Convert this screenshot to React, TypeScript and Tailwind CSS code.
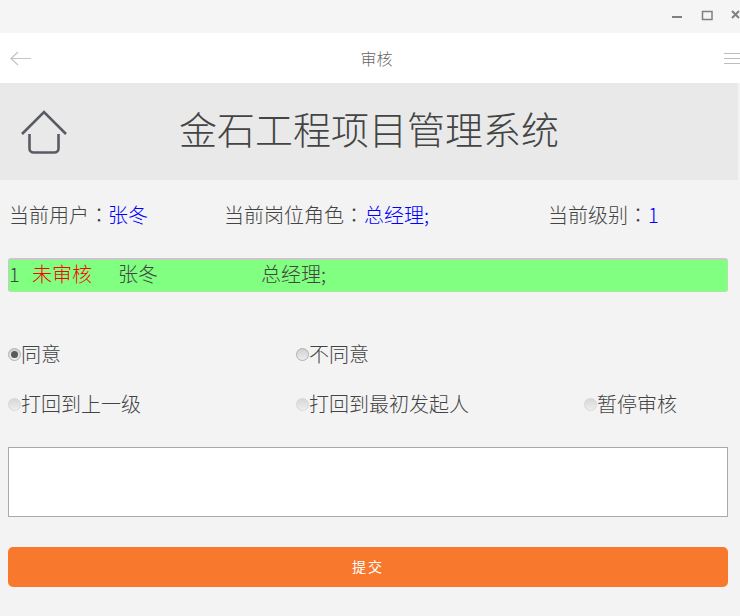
const FONT = "font-['Noto_Sans_CJK_SC','Liberation_Sans',sans-serif]";

function Radio({ checked, faded, label }: { checked?: boolean; faded?: boolean; label: string }) {
  return (
    <label className="flex h-6 items-center text-[20px] font-light text-[#444444]">
      <span
        className={`flex h-[13px] w-[13px] shrink-0 items-center justify-center rounded-full border bg-gradient-to-b from-[#d0d0d0] to-[#eeeeee] ${
          faded ? "border-[#d0d0d0] opacity-80" : "border-[#b0b0b0]"
        }`}
      >
        {checked ? <span className="h-[7px] w-[7px] rounded-full bg-[#5a5a5a]" /> : null}
      </span>
      <span>{label}</span>
    </label>
  );
}

function Colon() {
  return <span className="font-['Noto_Sans_CJK_TC',sans-serif]">：</span>;
}

export default function App() {
  return (
    <div className={`flex h-[616px] w-[740px] flex-col overflow-hidden bg-[#f3f3f3] ${FONT}`}>
      {/* window chrome */}
      <div className="flex h-[33px] items-start justify-end bg-[#f5f5f5]">
        <svg width="70" height="33" viewBox="0 0 70 33" className="shrink-0">
          <path d="M2 17h10" stroke="#808080" strokeWidth="2" fill="none" />
          <rect x="32.5" y="11.5" width="9.5" height="8" stroke="#808080" strokeWidth="1.5" fill="none" />
          <path d="M62 11l7 7M69 11l-7 7" stroke="#808080" strokeWidth="2" fill="none" />
        </svg>
      </div>

      {/* nav bar */}
      <div className="flex h-[50px] items-center justify-between bg-white">
        <svg width="32" height="50" viewBox="0 0 32 50" className="shrink-0">
          <path d="M18 19l-7 6.5 7 6.5M11 25.5h20" stroke="#c4c4c4" strokeWidth="1.2" fill="none" />
        </svg>
        <span className="-ml-[2px] text-[16px] font-light text-[#666666]">审核</span>
        <svg width="17" height="50" viewBox="0 0 17 50" className="shrink-0">
          <path d="M1 20.5h16M1 25.5h16M1 30.5h16" stroke="#bdbdbd" strokeWidth="1" fill="none" />
        </svg>
      </div>

      <div className="flex w-[738px] flex-col">
        {/* system header */}
        <div className="relative flex h-[97px] items-center justify-center bg-[#e9e9e9] pb-2">
          <svg width="48" height="46" viewBox="0 0 48 46" className="absolute left-5 top-[27px]">
            <path
              d="M2 24L24 2l22 22M9.5 24v14.500a4 4 0 0 0 4 4h21a4 4 0 0 0 4-4V24"
              stroke="#595b63"
              strokeWidth="2.6"
              fill="none"
            />
          </svg>
          <h1 className="text-[38px] font-light leading-none text-[#444444]">金石工程项目管理系统</h1>
        </div>

        <div className="flex w-[736px] flex-col px-2">
          {/* current user */}
          <div className="mt-[23px] flex h-6 items-center text-[20px] font-light text-[#444444]">
            <span className="w-[216px] pl-px">
              当前用户<Colon /><span className="-ml-px text-[#0000ff]">张冬</span>
            </span>
            <span className="w-[324px]">
              当前岗位角色<Colon /><span className="text-[#0000ff]">总经理;</span>
            </span>
            <span>
              当前级别<Colon /><span className="text-[#0000ff]">1</span>
            </span>
          </div>

          {/* status row */}
          <div className="mt-[31px] flex h-[34px] items-center rounded-[3px] border border-t-2 border-[#c8c8c8] border-b-[#a8e8a0] border-r-[#a8e8a0] bg-[#80ff80] pb-1 text-[20px] font-light text-[#444444]">
            <span className="w-[23px]">1</span>
            <span className="w-[86px] text-[#ff0000]">未审核</span>
            <span className="w-[143px]">张冬</span>
            <span>总经理;</span>
          </div>

          {/* options */}
          <div className="mt-[50px] grid grid-cols-[288px_288px_1fr] gap-y-[26px]">
            <Radio checked label="同意" />
            <Radio label="不同意" />
            <span />
            <Radio faded label="打回到上一级" />
            <Radio faded label="打回到最初发起人" />
            <Radio faded label="暂停审核" />
          </div>

          <textarea className="mt-[31px] block h-[70px] w-[720px] resize-none border border-[#a9a9a9] bg-white" />

          <button
            type="button"
            className="mt-[30px] h-10 w-[720px] rounded-[5px] bg-[#f8782d] pb-px text-[14px] tracking-[2px] text-white"
          >
            提交
          </button>
        </div>
      </div>
    </div>
  );
}
